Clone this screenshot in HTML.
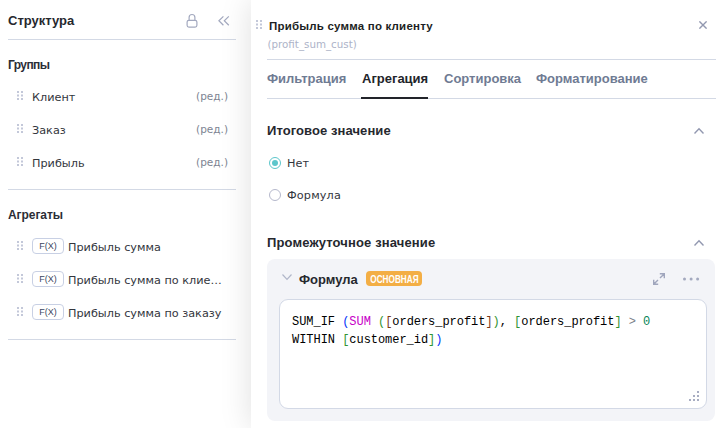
<!DOCTYPE html>
<html lang="ru"><head><meta charset="utf-8">
<style>
*{box-sizing:border-box;margin:0;padding:0}
html,body{width:724px;height:428px;overflow:hidden;background:#fff}
body{font-family:"Liberation Sans",sans-serif;color:#2b2d33;position:relative;font-size:13px}
.abs{position:absolute;white-space:nowrap}
.left{position:absolute;left:0;top:0;width:251px;height:428px;background:#fff}
.right{position:absolute;left:251px;top:0;width:473px;height:428px;background:#fff;box-shadow:0 0 30px rgba(0,0,0,.13)}
.hl{position:absolute;height:1px;background:#d3d9e5}
.h1{font-size:13px;font-weight:bold;color:#26282e}
.h2{font-size:12px;font-weight:bold;color:#2b2d36}
.it{font-family:"DejaVu Sans","Liberation Sans",sans-serif;font-size:11.25px;color:#33363d}
.ed{font-family:"DejaVu Sans","Liberation Sans",sans-serif;font-size:10.5px;color:#7d8492}
.fx{position:absolute;width:32px;height:16px;border:1px solid #c8d0e4;border-radius:4px;font-size:9px;line-height:14px;text-align:center;color:#3a4660;background:#fff}
.tab{font-size:13px;font-weight:bold;color:#6f7b93}
.tab.on{color:#22242a}
.grip{position:absolute;width:6px;height:9px}
</style></head><body>
<div class="left">
  <div class="abs h1" style="left:8px;top:13px">Структура</div>
  <svg class="abs" style="left:186px;top:13px" width="12" height="15" viewBox="0 0 12 15" fill="none" stroke="#a3a9bf" stroke-width="1.2"><rect x="1.1" y="7.3" width="9.8" height="6.8" rx="1.8"/><path d="M3.1 7.3V4.4a2.9 2.9 0 0 1 5.8 0v2.9"/></svg>
  <svg class="abs" style="left:218px;top:15px" width="12" height="12" viewBox="0 0 12 12" fill="none" stroke="#a3a9bf" stroke-width="1.2"><path d="M5.4 1.4L.9 5.8l4.5 4.4M10.8 1.4L6.3 5.8l4.5 4.4"/></svg>
  <div class="hl" style="left:8px;top:39px;width:228px"></div>
  <div class="abs h2" style="left:8px;top:58px;letter-spacing:-.6px">Группы</div>

  <svg class="grip" style="left:17px;top:91px" width="6" height="9" viewBox="0 0 6 9" fill="#c3c8d9"><rect x="0" y="0" width="2" height="2"/><rect x="4" y="0" width="2" height="2"/><rect x="0" y="3.5" width="2" height="2"/><rect x="4" y="3.5" width="2" height="2"/><rect x="0" y="7" width="2" height="2"/><rect x="4" y="7" width="2" height="2"/></svg>
  <div class="abs it" style="left:32px;top:91px">Клиент</div><div class="abs ed" style="right:23px;top:90px">(ред.)</div>
  <svg class="grip" style="left:17px;top:124px" width="6" height="9" viewBox="0 0 6 9" fill="#c3c8d9"><rect x="0" y="0" width="2" height="2"/><rect x="4" y="0" width="2" height="2"/><rect x="0" y="3.5" width="2" height="2"/><rect x="4" y="3.5" width="2" height="2"/><rect x="0" y="7" width="2" height="2"/><rect x="4" y="7" width="2" height="2"/></svg>
  <div class="abs it" style="left:32px;top:124px">Заказ</div><div class="abs ed" style="right:23px;top:123px">(ред.)</div>
  <svg class="grip" style="left:17px;top:157px" width="6" height="9" viewBox="0 0 6 9" fill="#c3c8d9"><rect x="0" y="0" width="2" height="2"/><rect x="4" y="0" width="2" height="2"/><rect x="0" y="3.5" width="2" height="2"/><rect x="4" y="3.5" width="2" height="2"/><rect x="0" y="7" width="2" height="2"/><rect x="4" y="7" width="2" height="2"/></svg>
  <div class="abs it" style="left:32px;top:157px">Прибыль</div><div class="abs ed" style="right:23px;top:156px">(ред.)</div>
  <div class="hl" style="left:8px;top:189px;width:228px"></div>
  <div class="abs h2" style="left:8px;top:208px;letter-spacing:-.06px">Агрегаты</div>
  <svg class="grip" style="left:17px;top:241px" width="6" height="9" viewBox="0 0 6 9" fill="#c3c8d9"><rect x="0" y="0" width="2" height="2"/><rect x="4" y="0" width="2" height="2"/><rect x="0" y="3.5" width="2" height="2"/><rect x="4" y="3.5" width="2" height="2"/><rect x="0" y="7" width="2" height="2"/><rect x="4" y="7" width="2" height="2"/></svg>
  <div class="fx" style="left:32px;top:238px">F(X)</div><div class="abs it" style="left:68px;top:241px">Прибыль сумма</div>
  <svg class="grip" style="left:17px;top:274px" width="6" height="9" viewBox="0 0 6 9" fill="#c3c8d9"><rect x="0" y="0" width="2" height="2"/><rect x="4" y="0" width="2" height="2"/><rect x="0" y="3.5" width="2" height="2"/><rect x="4" y="3.5" width="2" height="2"/><rect x="0" y="7" width="2" height="2"/><rect x="4" y="7" width="2" height="2"/></svg>
  <div class="fx" style="left:32px;top:271px">F(X)</div><div class="abs it" style="left:68px;top:274px">Прибыль сумма по клие…</div>
  <svg class="grip" style="left:17px;top:307px" width="6" height="9" viewBox="0 0 6 9" fill="#c3c8d9"><rect x="0" y="0" width="2" height="2"/><rect x="4" y="0" width="2" height="2"/><rect x="0" y="3.5" width="2" height="2"/><rect x="4" y="3.5" width="2" height="2"/><rect x="0" y="7" width="2" height="2"/><rect x="4" y="7" width="2" height="2"/></svg>
  <div class="fx" style="left:32px;top:304px">F(X)</div><div class="abs it" style="left:68px;top:307px">Прибыль сумма по заказу</div>
  <div class="hl" style="left:8px;top:339px;width:228px"></div>
</div>
<div class="right">
  <svg class="grip" style="left:5px;top:20px" width="6" height="9" viewBox="0 0 6 9" fill="#c3c8d9"><rect x="0" y="0" width="2" height="2"/><rect x="4" y="0" width="2" height="2"/><rect x="0" y="3.5" width="2" height="2"/><rect x="4" y="3.5" width="2" height="2"/><rect x="0" y="7" width="2" height="2"/><rect x="4" y="7" width="2" height="2"/></svg>
  <div class="abs" style="left:18px;top:20px;font-size:11.5px;font-weight:bold;color:#1d1f24;letter-spacing:.2px">Прибыль сумма по клиенту</div>
  <div class="abs" style="left:16.5px;top:38px;font-family:'DejaVu Sans','Liberation Sans',sans-serif;font-size:10.3px;color:#adb3c8">(profit_sum_cust)</div>
  <svg class="abs" style="left:448px;top:21px" width="8" height="8" viewBox="0 0 8 8" stroke="#9298b0" stroke-width="1.4"><path d="M.4 .4l7.2 7.2M7.6 .4L.4 7.6"/></svg>
  <div class="hl" style="left:16px;top:59px;width:449px"></div>
  <div class="abs tab" style="left:16px;top:70.5px">Фильтрация</div>
  <div class="abs tab on" style="left:111px;top:70.5px">Агрегация</div>
  <div class="abs tab" style="left:193px;top:70.5px">Сортировка</div>
  <div class="abs tab" style="left:285px;top:70.5px">Форматирование</div>
  <div class="hl" style="left:16px;top:98px;width:449px"></div>
  <div class="abs" style="left:110px;top:97px;width:67px;height:2px;background:#22242a"></div>

  <div class="abs h1" style="left:16px;top:123px;letter-spacing:.08px">Итоговое значение</div>
  <svg class="abs" style="left:443px;top:127px" width="10" height="8" viewBox="0 0 10 8" fill="none" stroke="#9298b0" stroke-width="1.4"><path d="M.5 6.5L5 1.7l4.5 4.8"/></svg>
  <div class="abs" style="left:18px;top:157px;width:12px;height:12px;border:1px solid #5cc6cb;border-radius:50%"></div>
  <div class="abs" style="left:21px;top:160px;width:6px;height:6px;background:#5cc6cb;border-radius:50%"></div>
  <div class="abs it" style="left:36px;top:157px">Нет</div>
  <div class="abs" style="left:18px;top:189px;width:12px;height:12px;border:1px solid #b5b8cc;border-radius:50%"></div>
  <div class="abs it" style="left:36px;top:189px;letter-spacing:.15px">Формула</div>

  <div class="abs h1" style="left:16px;top:235px;letter-spacing:.13px">Промежуточное значение</div>
  <svg class="abs" style="left:443px;top:239px" width="10" height="8" viewBox="0 0 10 8" fill="none" stroke="#9298b0" stroke-width="1.4"><path d="M.5 6.5L5 1.7l4.5 4.8"/></svg>

  <div class="abs" style="left:16px;top:259px;width:448px;height:162px;background:#f3f4f8;border-radius:8px"></div>
  <svg class="abs" style="left:31px;top:273px" width="10" height="8" viewBox="0 0 10 8" fill="none" stroke="#b0b6c9" stroke-width="1.2"><path d="M.5 1.5L5 6.3l4.5-4.8"/></svg>
  <div class="abs h1" style="left:48px;top:272px">Формула</div>
  <div class="abs" style="left:115px;top:271px;width:56px;height:15px;background:#f3ae45;border-radius:4px;color:#fff;font-size:10px;font-weight:bold;line-height:17.6px;text-align:center"><span style="display:inline-block;transform:scaleX(.82);transform-origin:50% 50%;margin:0 -10px">ОСНОВНАЯ</span></div>
  <svg class="abs" style="left:402px;top:273px" width="12" height="12" viewBox="0 0 12 12" fill="none" stroke="#a0a6bd" stroke-width="1.4"><path d="M6.8 .7h4.5v4.5M11.3 .7L7 5M5.2 11.3H.7V6.8M.7 11.3L5 7"/></svg>
  <svg class="abs" style="left:431px;top:276px" width="18" height="6" viewBox="0 0 18 6" fill="#a3a9bf"><circle cx="2.5" cy="3" r="1.5"/><circle cx="9.1" cy="3" r="1.5"/><circle cx="15.6" cy="3" r="1.5"/></svg>
  <div class="abs" style="left:28px;top:299px;width:428px;height:110px;background:#fff;border:1px solid #d3d9e6;border-radius:9px"></div>
  <div class="abs" style="left:41px;top:313px;font-family:'Liberation Mono','DejaVu Sans Mono',monospace;font-size:12px;line-height:18px;letter-spacing:-.04px;color:#000;white-space:pre">SUM_IF <span style="color:#0431fa">(</span><span style="color:#c700c7">SUM</span> <span style="color:#319331">(</span><span style="color:#7b3814">[</span>orders_profit<span style="color:#7b3814">]</span><span style="color:#319331">)</span>, <span style="color:#319331">[</span>orders_profit<span style="color:#319331">]</span> <span style="color:#7a7f8a">&gt;</span> <span style="color:#098658">0</span>
WITHIN <span style="color:#319331">[</span>customer_id<span style="color:#319331">]</span><span style="color:#0431fa">)</span></div>
  <svg class="abs" style="left:438px;top:391px" width="10" height="10" viewBox="0 0 10 10" fill="#a8adc2"><rect x="8" y="0" width="2" height="2"/><rect x="4" y="4" width="2" height="2"/><rect x="8" y="4" width="2" height="2"/><rect x="0" y="8" width="2" height="2"/><rect x="4" y="8" width="2" height="2"/><rect x="8" y="8" width="2" height="2"/></svg>
</div>
</body></html>
